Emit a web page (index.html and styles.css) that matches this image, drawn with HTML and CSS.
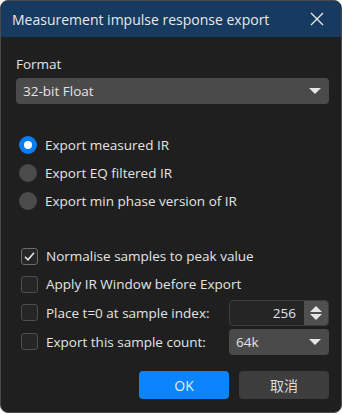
FILE: index.html
```html
<!DOCTYPE html>
<html lang="en">
<head>
  <meta charset="UTF-8" />
  <meta name="viewport" content="width=device-width, initial-scale=1.0" />
  <title>Measurement impulse response export</title>
  <link rel="stylesheet" href="styles.css">
</head>
<body>
  <div class="window">
    <div class="titlebar">
      <span class="title">Measurement impulse response export</span>
      <svg class="close" width="14" height="14" viewBox="0 0 14 14"><path d="M1 1L13 13M13 1L1 13" stroke="#e8e8e8" stroke-width="1.4"/></svg>
    </div>

    <div class="content">
      <div class="label">Format</div>
      <div class="combo wide">
        <span>32-bit Float</span>
        <span class="arrow"></span>
      </div>

      <div class="group radios">
        <div class="row"><span class="radio on"></span>Export measured IR</div>
        <div class="row"><span class="radio"></span>Export EQ filtered IR</div>
        <div class="row"><span class="radio"></span>Export min phase version of IR</div>
      </div>

      <div class="group checks">
        <div class="row">
          <span class="check on"><svg width="13" height="13" viewBox="0 0 13 13"><path d="M2 6.8L5 9.8L11 2.8" fill="none" stroke="#e6e6e6" stroke-width="1.6"/></svg></span>
          Normalise samples to peak value
        </div>
        <div class="row"><span class="check"></span>Apply IR Window before Export</div>
        <div class="row field-row">
          <span class="check"></span>
          <span class="grow">Place t=0 at sample index:</span>
          <div class="spin">
            <span class="spin-value">256</span>
            <span class="spin-btn"><span class="up"></span><span class="down"></span></span>
          </div>
        </div>
        <div class="row field-row">
          <span class="check"></span>
          <span class="grow">Export this sample count:</span>
          <div class="combo small">
            <span>64k</span>
            <span class="arrow"></span>
          </div>
        </div>
      </div>

      <div class="buttons">
        <button class="btn primary">OK</button>
        <button class="btn">取消</button>
      </div>
    </div>
  </div>
</body>
</html>
```

FILE: styles.css
```css
body { margin: 0; background: #ffffff; font-family: "Open Sans", "Noto Sans CJK SC", sans-serif; font-size: 13.5px; color: #e4e4e4; }
.window { width: 340px; height: 411px; border: 1px solid #4a4a4a; border-radius: 8px; background: #1f1f1f; overflow: hidden; }
.titlebar { height: 36px; background: #173a60; display: flex; align-items: center; justify-content: space-between; padding: 0 17px 0 11px; }
.title { font-size: 14px; color: #e8e8e8; }
.content { padding: 16px 12px 0 15px; }
.label { height: 22px; line-height: 22px; margin-bottom: 3px; }
.combo { display: flex; align-items: center; justify-content: space-between; background: #4a4a4a; border-radius: 4px; height: 26px; padding: 0 8px 0 7px; box-sizing: border-box; }
.arrow { width: 0; height: 0; border-left: 6px solid transparent; border-right: 6px solid transparent; border-top: 6px solid #e6e6e6; }
.group { display: flex; flex-direction: column; }
.radios { margin-top: 30px; gap: 7px; }
.checks { margin-top: 32px; gap: 2px; }
.row { display: flex; align-items: center; height: 26px; }
.radios .row { height: 21px; }
.radio { width: 18px; height: 18px; border-radius: 50%; background: #4b4b4b; margin: 0 8px 0 3px; box-sizing: border-box; }
.radio.on { border: 5px solid #0a7cf6; background: #ffffff; }
.check { width: 17px; height: 17px; border: 1px solid #4e4e4e; border-radius: 3px; background: #262626; box-sizing: border-box; margin: 0 8px 0 5px; display: flex; align-items: center; justify-content: center; }
.check.on { border-color: #6a6a6a; }
.field-row { height: 27px; }
.grow { flex: 1; }
.spin { width: 100px; height: 26px; display: flex; border: 1px solid #3c3c3c; border-radius: 4px; box-sizing: border-box; overflow: hidden; background: #252525; }
.spin-value { flex: 1; text-align: right; line-height: 24px; padding-right: 8px; }
.spin-btn { width: 24px; background: #505050; display: flex; flex-direction: column; align-items: center; justify-content: center; gap: 2px; }
.up { border-left: 6px solid transparent; border-right: 6px solid transparent; border-bottom: 6px solid #e6e6e6; }
.down { border-left: 6px solid transparent; border-right: 6px solid transparent; border-top: 6px solid #e6e6e6; }
.combo.small { width: 100px; }
.buttons { display: flex; justify-content: flex-end; gap: 10px; margin-top: 16px; }
.btn { width: 90px; height: 28px; border: none; border-radius: 4px; background: #3d3d3d; color: #dcdcdc; font-family: inherit; font-size: 14px; }
.btn.primary { background: #0a84ff; color: #e0eeff; }
```
